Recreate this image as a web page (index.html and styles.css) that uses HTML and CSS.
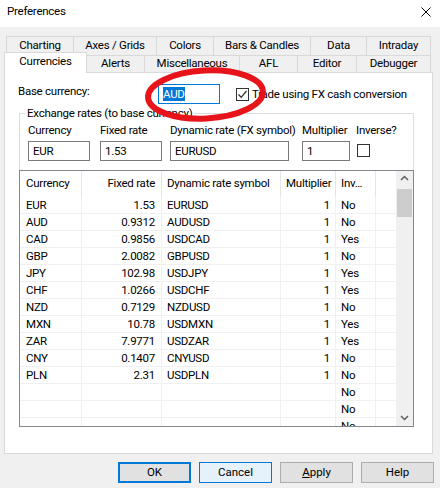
FILE: index.html
```
<!DOCTYPE html>
<html lang="en">
<head>
<meta charset="UTF-8">
<title>Preferences</title>
<link rel="stylesheet" href="styles.css">
</head>
<body>
<div class="dlg">
  <div class="caption">
    <span>Preferences</span>
    <svg class="close" width="10" height="10" viewBox="0 0 10 10"><path d="M0.5 0.5L9.5 9.5M9.5 0.5L0.5 9.5" stroke="#000" stroke-width="1" fill="none"/></svg>
  </div>

  <div class="tabs">
    <div class="tabrow top">
      <div class="tab">Charting</div>
      <div class="tab">Axes / Grids</div>
      <div class="tab">Colors</div>
      <div class="tab">Bars &amp; Candles</div>
      <div class="tab">Data</div>
      <div class="tab last">Intraday</div>
    </div>
    <div class="tabrow bottom">
      <div class="tab sel">Currencies</div>
      <div class="tab">Alerts</div>
      <div class="tab">Miscellaneous</div>
      <div class="tab">AFL</div>
      <div class="tab">Editor</div>
      <div class="tab last">Debugger</div>
    </div>
  </div>

  <div class="page">
    <div class="base">
      <span class="lbl">Base currency:</span>
      <span class="edit focus"><span class="hl">AUD</span></span>
      <span class="chk"><svg width="11" height="11" viewBox="0 0 11 11"><path d="M1.5 5.5L4.2 8.3L9.5 2" stroke="#333" stroke-width="1.3" fill="none"/></svg></span>
      <span class="chk-text">Trade using FX cash conversion</span>
    </div>

    <fieldset class="group">
      <legend>Exchange rates (to base currency)</legend>
      <div class="fields">
        <span>Currency</span>
        <span>Fixed rate</span>
        <span>Dynamic rate (FX symbol)</span>
        <span>Multiplier</span>
        <span>Inverse?</span>
        <span class="edit w62">EUR</span>
        <span class="edit w62">1.53</span>
        <span class="edit w119">EURUSD</span>
        <span class="edit w48">1</span>
        <span class="chk off"></span>
      </div>

      <div class="list">
        <div class="list-main">
          <div class="row head">
            <span class="c1">Currency</span>
            <span class="c2">Fixed rate</span>
            <span class="c3">Dynamic rate symbol</span>
            <span class="c4">Multiplier</span>
            <span class="c5">Inv…</span>
            <span class="c6"></span>
          </div>
          <div class="row"><span class="c1">EUR</span><span class="c2">1.53</span><span class="c3">EURUSD</span><span class="c4">1</span><span class="c5">No</span><span class="c6"></span></div>
          <div class="row"><span class="c1">AUD</span><span class="c2">0.9312</span><span class="c3">AUDUSD</span><span class="c4">1</span><span class="c5">No</span><span class="c6"></span></div>
          <div class="row"><span class="c1">CAD</span><span class="c2">0.9856</span><span class="c3">USDCAD</span><span class="c4">1</span><span class="c5">Yes</span><span class="c6"></span></div>
          <div class="row"><span class="c1">GBP</span><span class="c2">2.0082</span><span class="c3">GBPUSD</span><span class="c4">1</span><span class="c5">No</span><span class="c6"></span></div>
          <div class="row"><span class="c1">JPY</span><span class="c2">102.98</span><span class="c3">USDJPY</span><span class="c4">1</span><span class="c5">Yes</span><span class="c6"></span></div>
          <div class="row"><span class="c1">CHF</span><span class="c2">1.0266</span><span class="c3">USDCHF</span><span class="c4">1</span><span class="c5">Yes</span><span class="c6"></span></div>
          <div class="row"><span class="c1">NZD</span><span class="c2">0.7129</span><span class="c3">NZDUSD</span><span class="c4">1</span><span class="c5">No</span><span class="c6"></span></div>
          <div class="row"><span class="c1">MXN</span><span class="c2">10.78</span><span class="c3">USDMXN</span><span class="c4">1</span><span class="c5">Yes</span><span class="c6"></span></div>
          <div class="row"><span class="c1">ZAR</span><span class="c2">7.9771</span><span class="c3">USDZAR</span><span class="c4">1</span><span class="c5">Yes</span><span class="c6"></span></div>
          <div class="row"><span class="c1">CNY</span><span class="c2">0.1407</span><span class="c3">CNYUSD</span><span class="c4">1</span><span class="c5">No</span><span class="c6"></span></div>
          <div class="row"><span class="c1">PLN</span><span class="c2">2.31</span><span class="c3">USDPLN</span><span class="c4">1</span><span class="c5">No</span><span class="c6"></span></div>
          <div class="row"><span class="c1"></span><span class="c2"></span><span class="c3"></span><span class="c4"></span><span class="c5">No</span><span class="c6"></span></div>
          <div class="row"><span class="c1"></span><span class="c2"></span><span class="c3"></span><span class="c4"></span><span class="c5">No</span><span class="c6"></span></div>
          <div class="row"><span class="c1"></span><span class="c2"></span><span class="c3"></span><span class="c4"></span><span class="c5">No</span><span class="c6"></span></div>
        </div>
        <div class="vscroll">
          <div class="sb-btn"><svg width="9" height="6" viewBox="0 0 9 6"><path d="M1 5L4.5 1.5L8 5" stroke="#606060" stroke-width="1.5" fill="none"/></svg></div>
          <div class="thumb"></div>
          <div class="sb-btn down"><svg width="9" height="6" viewBox="0 0 9 6"><path d="M1 1L4.5 4.5L8 1" stroke="#606060" stroke-width="1.5" fill="none"/></svg></div>
        </div>
      </div>
    </fieldset>
  </div>

  <div class="btns">
    <button class="btn def">OK</button>
    <button class="btn hot">Cancel</button>
    <button class="btn"><u>A</u>pply</button>
    <button class="btn">Help</button>
  </div>

  <!-- red marker drawn over the base currency box -->
  <svg class="mark" width="440" height="488" viewBox="0 0 440 488">
    <ellipse cx="205.5" cy="94.5" rx="57.5" ry="24" transform="rotate(-3 205.5 94.5)" fill="none" stroke="#e8141c" stroke-width="6"/>
  </svg>
</div>
</body>
</html>
```

FILE: styles.css
```
body{margin:0;background:#f0f0f0;font-family:Roboto,"Liberation Sans",sans-serif;font-size:11.5px;letter-spacing:-0.25px;color:#000;}
.dlg{position:relative;width:440px;height:488px;overflow:hidden;}

/* title bar */
.caption{height:27px;box-sizing:border-box;background:#fff;display:flex;padding:4px 9px 0 7px;line-height:15px;}
.close{margin-left:auto;margin-top:3px;}

/* tabs */
.tabs{margin-top:9px;}
.tabrow{display:grid;}
.tabrow.top{grid-template-columns:67px 83px 57px 97px 56px 65px;grid-template-rows:19px;margin-left:6px;height:19px;}
.tabrow.bottom{grid-template-columns:83px 57px 95px 58px 59px 75px;grid-template-rows:17px;margin-left:4px;height:17px;}
.tab{box-sizing:border-box;border:1px solid #d9d9d9;border-right:0;border-bottom:0;background:#f0f0f0;text-align:center;line-height:15px;padding-top:1px;white-space:nowrap;}
.tab.last{border-right:1px solid #d9d9d9;}
.tabrow.bottom .tab{padding-top:0;}
.tabrow.bottom .tab.sel{position:relative;z-index:1;background:#fff;margin-top:-3px;height:21px;padding-top:1px;border-right:1px solid #d9d9d9;}
.tab.sel + .tab{border-left:0;}

/* page */
.page{margin-left:4px;width:429px;height:382px;box-sizing:border-box;border:1px solid #d9d9d9;background:#fff;}
.base{display:flex;align-items:flex-start;height:20px;margin-top:11px;padding-left:13px;}
.lbl{width:140px;line-height:15px;}
.edit{display:block;box-sizing:border-box;height:20px;border:1px solid #7a7a7a;background:#fff;line-height:18px;padding-left:4px;white-space:nowrap;}
.edit.focus{width:62px;border-color:#0078d7;}
.hl{background:#0078d7;color:#fff;}
.chk{display:block;width:13px;height:13px;box-sizing:border-box;border:1px solid #333;background:#fff;}
.chk svg{display:block;}
.base .chk{margin:4px 0 0 16px;}
.chk-text{margin:3px 0 0 3px;line-height:15px;}

/* group box */
.group{margin:2px 0 0 14px;padding:0;width:395px;box-sizing:border-box;min-width:0;border:1px solid #dcdcdc;border-bottom:0;}
.group legend{margin-left:5px;padding:0 2px;line-height:15px;}
.fields{display:grid;grid-template-columns:72px 70px 132px 54px auto;grid-template-rows:15px 20px;row-gap:3px;margin-top:2px;padding-left:8px;line-height:15px;white-space:nowrap;}
.w62{width:62px;}
.w119{width:119px;}
.w48{width:48px;}
.fields .chk{margin:3px 0 0 1px;}

/* list view */
.list{display:flex;margin:9px -1px 0;height:257px;box-sizing:border-box;border:1px solid #828790;background:#fff;}
.list-main{flex:1;overflow:hidden;}
.row{display:grid;grid-template-columns:62px 80px 119px 55px 40px 19px;height:17px;box-sizing:border-box;border-bottom:1px solid #f0f0f0;}
.row span{border-right:1px solid #f0f0f0;line-height:16px;padding:0 5px;white-space:nowrap;overflow:hidden;}
.row .c1{padding-left:6px;}
.row .c2,.row .c4{text-align:right;}
.row .c2{padding-right:6px;}
.row .c6{border-right:0;}
.row.head{height:26px;border-bottom:0;}
.row.head span{border-right-color:#e5e5e5;padding-top:5px;line-height:15px;}
.row.head .c6{border-right:0;}
.vscroll{width:17px;background:#f0f0f0;display:flex;flex-direction:column;}
.sb-btn{height:17px;display:flex;align-items:center;justify-content:center;}
.sb-btn svg{margin-top:-3px;}
.sb-btn.down{margin-top:auto;}
.sb-btn.down svg{margin-top:0;}
.thumb{height:28px;margin:1px 1px 0;background:#cdcdcd;}

/* buttons */
.btns{display:flex;justify-content:flex-end;gap:8px;margin-top:8px;padding-right:6px;}
.btn{width:73px;height:21px;box-sizing:border-box;padding:0;border:1px solid #adadad;background:#e1e1e1;font:inherit;line-height:19px;text-align:center;color:#000;}
.btn.def{border:2px solid #0078d7;line-height:17px;}
.btn.hot{border-color:#0078d7;background:#e5f1fb;}

.mark{position:absolute;left:0;top:0;pointer-events:none;}
```
